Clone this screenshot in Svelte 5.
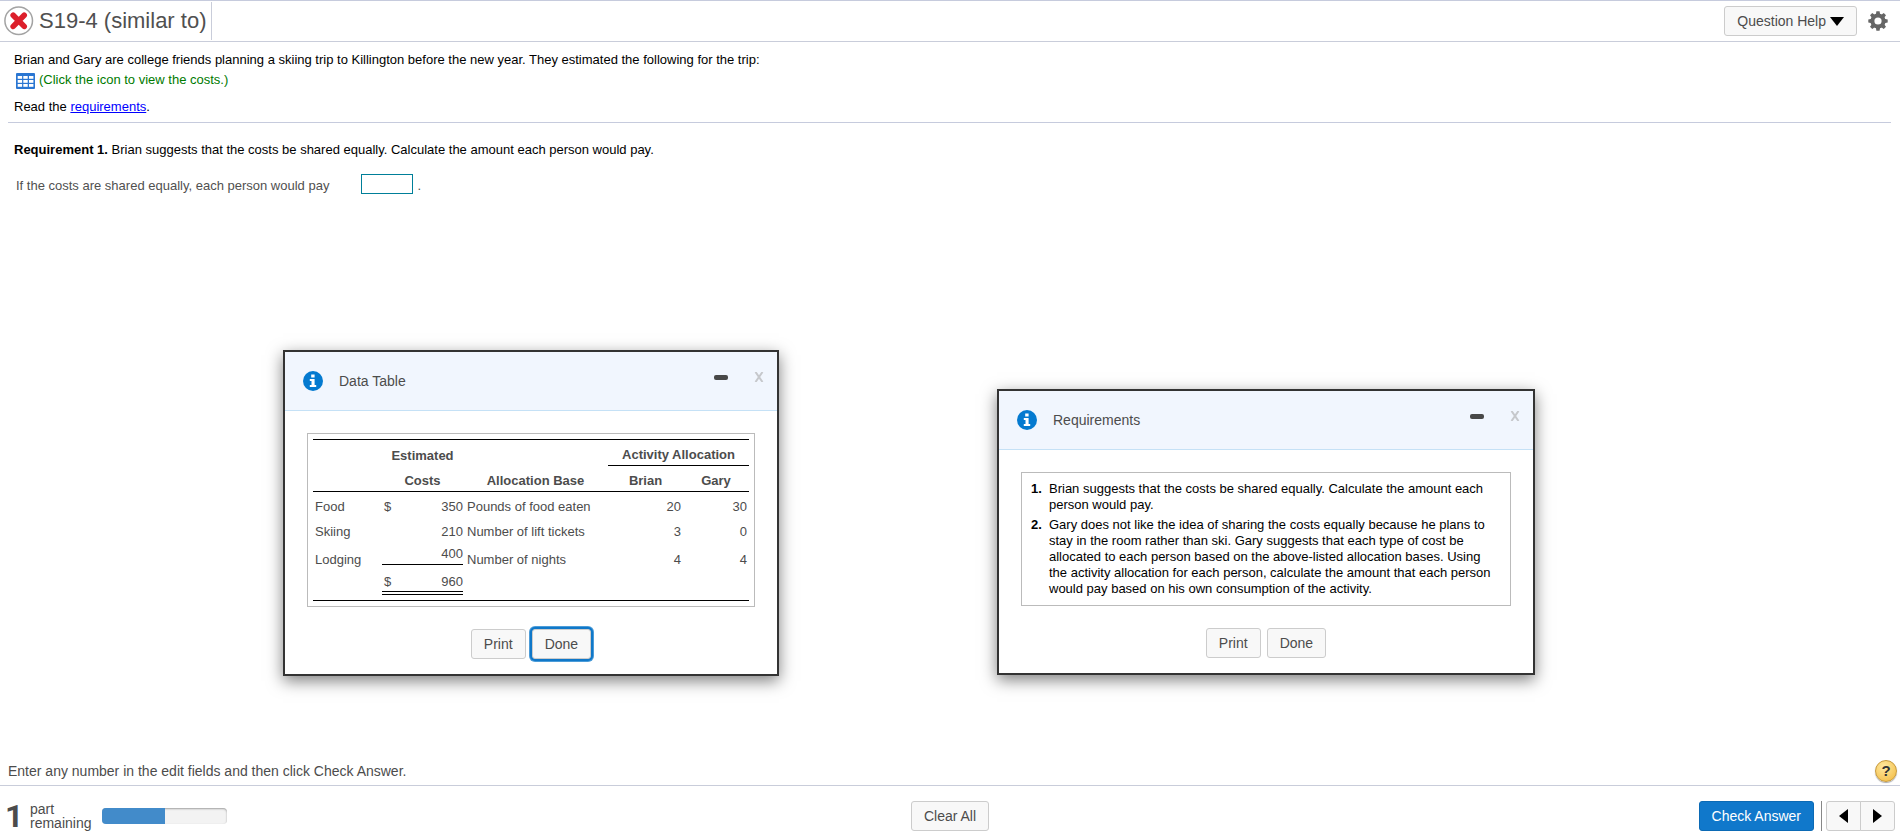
<script>
  const rows = [
    { item: 'Food', sign: '$', cost: '350', base: 'Pounds of food eaten', brian: '20', gary: '30', kind: 'first' },
    { item: 'Skiing', sign: '', cost: '210', base: 'Number of lift tickets', brian: '3', gary: '0', kind: 'plain' },
    { item: 'Lodging', sign: '', cost: '400', base: 'Number of nights', brian: '4', gary: '4', kind: 'last' },
    { item: '', sign: '$', cost: '960', base: '', brian: '', gary: '', kind: 'total' }
  ];
  const requirements = [
    'Brian suggests that the costs be shared equally. Calculate the amount each person would pay.',
    'Gary does not like the idea of sharing the costs equally because he plans to stay in the room rather than ski. Gary suggests that each type of cost be allocated to each person based on the above-listed allocation bases. Using the activity allocation for each person, calculate the amount that each person would pay based on his own consumption of the activity.'
  ];
  const teeth = [0, 45, 90, 135, 180, 225, 270, 315];
  const progress = 50;
  let answer = $state('');
</script>

{#snippet dialogHead(title)}
  <header class="dialog-head">
    <svg class="info" width="20" height="20" viewBox="0 0 20 20" aria-hidden="true">
      <circle cx="10" cy="10" r="10" fill="#047ad0" />
      <path d="M8.2 3.6h3.4v2.8H8.2zM6.8 8h4.8v6h1.6v2H6.8v-2h1.7v-4H6.8z" fill="#fff" />
    </svg>
    <h2>{title}</h2>
    <button class="min" aria-label="Minimize"><span></span></button>
    <button class="close" aria-label="Close">
      <svg width="10" height="10" viewBox="0 0 10 10"><path d="M1.5 0L8.5 10M8.5 0L1.5 10" stroke="#c6c8cc" stroke-width="2" /></svg>
    </button>
  </header>
{/snippet}

<div class="page">
  <header class="top">
    <svg width="30" height="30" viewBox="0 0 30 30" aria-hidden="true">
      <circle cx="14.7" cy="14.7" r="13.8" fill="#fff" stroke="#a3a3a3" stroke-width="1.5" />
      <path d="M9.2 9.2L20.2 20.4M20.2 9.2L9.2 20.4" stroke="#dc1f2b" stroke-width="5.6" stroke-linecap="round" />
    </svg>
    <h1>S19-4 (similar to)</h1>
    <div class="tools">
      <button class="btn help-btn">Question Help
        <svg width="14" height="9" viewBox="0 0 14 9" aria-hidden="true"><path d="M0 0h14L7 9z" fill="#000" /></svg>
      </button>
      <button class="gear" aria-label="Settings">
        <svg width="20" height="20" viewBox="0 0 20 20">
          {#each teeth as angle}
            <path d="M7.8 4L8.4 0.3h3.2L12.2 4z" fill="#666" transform="rotate({angle} 10 10)" />
          {/each}
          <circle cx="10" cy="10" r="5.6" fill="none" stroke="#666" stroke-width="4" />
        </svg>
      </button>
    </div>
  </header>

  <main>
    <section class="intro">
      <p>Brian and Gary are college friends planning a skiing trip to Killington before the new year. They estimated the following for the trip:</p>
      <button class="view">
        <svg width="19" height="16" viewBox="0 0 19 16" aria-hidden="true">
          <rect width="19" height="16" rx="1" fill="#2a76d2" />
          {#each [3, 7, 11] as y}
            {#each [1.7, 7.3, 13] as x}
              <rect {x} {y} width="4.4" height="2.8" fill="#fff" />
            {/each}
          {/each}
        </svg>
        <span>(Click the icon to view the costs.)</span>
      </button>
      <p class="read">Read the <a href="#requirements">requirements</a>.</p>
    </section>
    <section class="question">
      <p><b>Requirement 1.</b> Brian suggests that the costs be shared equally. Calculate the amount each person would pay.</p>
      <div class="answer">
        <label for="share">If the costs are shared equally, each person would pay</label>
        <input id="share" type="text" bind:value={answer} />
        <span>.</span>
      </div>
    </section>
  </main>

  <section class="dialog data" aria-label="Data Table">
    {@render dialogHead('Data Table')}
    <div class="dialog-body">
      <div class="frame table-frame">
        <table>
          <colgroup><col class="c-item" /><col class="c-cost" /><col class="c-base" /><col class="c-brian" /><col /></colgroup>
          <thead>
            <tr><th></th><th>Estimated</th><th></th><th colspan="2" class="group">Activity Allocation</th></tr>
            <tr class="names"><th></th><th>Costs</th><th>Allocation Base</th><th>Brian</th><th>Gary</th></tr>
          </thead>
          <tbody>
            {#each rows as row}
              <tr class={row.kind}>
                <td>{row.item}</td>
                <td class="cost"><div><span>{row.sign}</span><span>{row.cost}</span></div></td>
                <td class="base">{row.base}</td>
                <td class="num">{row.brian}</td>
                <td class="num">{row.gary}</td>
              </tr>
            {/each}
          </tbody>
        </table>
      </div>
      <div class="actions"><button class="btn">Print</button><button class="btn focused">Done</button></div>
    </div>
  </section>

  <section class="dialog reqs" id="requirements" aria-label="Requirements">
    {@render dialogHead('Requirements')}
    <div class="dialog-body">
      <ol class="frame">
        {#each requirements as text, i}
          <li><b>{i + 1}.</b><span>{text}</span></li>
        {/each}
      </ol>
      <div class="actions"><button class="btn">Print</button><button class="btn">Done</button></div>
    </div>
  </section>

  <footer>
    <div class="hint">
      <p>Enter any number in the edit fields and then click Check Answer.</p>
      <button class="tip" aria-label="Help">?</button>
    </div>
    <div class="bar">
      <div class="status">
        <strong>1</strong>
        <span class="parts">part<br />remaining</span>
        <div class="progress" role="progressbar" aria-label="Progress" aria-valuenow={progress} aria-valuemin="0" aria-valuemax="100">
          <div style="width: {progress}%"></div>
        </div>
      </div>
      <button class="btn">Clear All</button>
      <div class="nav">
        <button class="btn primary">Check Answer</button>
        <div class="pager">
          <button aria-label="Previous"><svg width="9" height="14" viewBox="0 0 9 14"><path d="M9 0v14L0 7z" /></svg></button>
          <button aria-label="Next"><svg width="9" height="14" viewBox="0 0 9 14"><path d="M0 0v14l9-7z" /></svg></button>
        </div>
      </div>
    </div>
  </footer>
</div>

<style>
  :global(body) { margin: 0; background: #fff; }
  .page {
    position: relative;
    display: flex;
    flex-direction: column;
    min-height: 100vh;
    box-sizing: border-box;
    font: 13px/16px "Liberation Sans", Arial, sans-serif;
    color: #000;
  }
  .page :global(*) { box-sizing: border-box; }
  svg { display: block; flex: none; }
  p, h1, h2 { margin: 0; }
  button { font: inherit; padding: 0; border: 0; background: none; color: inherit; cursor: pointer; }

  .top {
    display: flex;
    align-items: center;
    height: 42px;
    padding-left: 4px;
    border-top: 1px solid #c6cbdd;
    border-bottom: 1px solid #c9cdda;
  }
  h1 {
    margin-left: 5px;
    padding-right: 5px;
    border-right: 1px solid #c9cdda;
    font-size: 22px;
    font-weight: 400;
    line-height: 38px;
    color: #505050;
  }
  .tools { display: flex; align-items: center; gap: 11px; margin-left: auto; padding-right: 12px; }
  .btn {
    height: 30px;
    padding: 0 12px;
    border: 1px solid #ccc;
    border-radius: 3px;
    background: #f8f8f8;
    font-size: 14px;
    line-height: 20px;
    color: #4c4c4c;
  }
  .help-btn { display: flex; align-items: center; gap: 4px; }

  main { flex: 1; }
  .intro { margin: 0 9px 0 8px; padding: 10px 6px 7px; border-bottom: 1px solid #c6cbdd; }
  .view { display: flex; align-items: flex-end; gap: 4px; margin: 4px 0 0 2px; color: #007a00; height: 17px; }
  .view span { align-self: flex-start; }
  .read { margin-top: 10px; }
  a { color: #00f; }
  .question { padding: 19px 14px; }
  .answer { display: flex; align-items: flex-end; margin: 16px 0 0 2px; color: #505050; }
  input { width: 52px; height: 20px; margin: 0 4px 0 32px; padding: 0 4px; border: 1px solid #007f99; border-radius: 0; font: inherit; outline: 0; }

  .dialog {
    position: absolute;
    border: 2px solid #333;
    background: #fff;
    box-shadow: 0 5px 15px rgba(0, 0, 0, 0.5);
    color: #4c4c4c;
  }
  .data { left: 283px; top: 350px; width: 496px; }
  .reqs { left: 997px; top: 389px; width: 538px; }
  .dialog-head {
    display: flex;
    align-items: center;
    height: 59px;
    padding: 0 13px 0 18px;
    border-bottom: 1px solid #c5e1f6;
    background: #f1f6fe;
  }
  h2 { margin: 0 auto 0 16px; font-size: 14px; font-weight: 400; line-height: 20px; }
  .min { display: grid; place-items: center; width: 14px; height: 20px; margin: 0 26px 8px 0; }
  .min span { width: 14px; height: 5px; border-radius: 2px; background: #484848; }
  .close { display: grid; place-items: center; width: 10px; height: 20px; margin-bottom: 8px; }
  .dialog-body { padding: 22px 22px 15px; }
  .frame { margin: 0; border: 1px solid #bbb; }
  .table-frame { padding: 5px; }
  .actions { display: flex; justify-content: center; gap: 6px; margin-top: 22px; }
  .focused { box-shadow: 0 0 0 2px #1078c9, 0 0 0 3px #4c9cd8; }

  table {
    width: 100%;
    table-layout: fixed;
    border-collapse: separate;
    border-spacing: 0;
    border-top: 1px solid #000;
    border-bottom: 1px solid #000;
  }
  .c-item { width: 69px; }
  .c-cost { width: 81px; }
  .c-base { width: 145px; }
  .c-brian { width: 75px; }
  th { height: 26px; padding: 8px 0 2px; line-height: 16px; vertical-align: top; white-space: nowrap; }
  .group { padding-top: 7px; border-bottom: 1px solid #000; }
  .names th { padding-top: 7px; border-bottom: 1px solid #000; }
  td { height: 25px; padding: 0 2px; line-height: 16px; }
  .first td { height: 28px; padding-top: 1px; }
  .plain td { padding-bottom: 2px; }
  .last td { height: 30px; }
  td.cost { padding-left: 0; padding-right: 0; }
  .last .cost, .total .cost { vertical-align: top; }
  .cost div { display: flex; justify-content: space-between; padding-left: 2px; }
  .last .cost div { padding-bottom: 2px; border-bottom: 1px solid #000; line-height: 17px; }
  .total .cost div { padding-bottom: 3px; border-bottom: 4px double #000; line-height: 13px; }
  td.base { padding-left: 4px; white-space: nowrap; }
  .num { text-align: right; }

  ol { padding: 8px 10px 8px 9px; color: #000; list-style: none; }
  li { display: grid; grid-template-columns: 18px 1fr; }
  li + li { margin-top: 4px; }

  .hint { display: flex; align-items: center; justify-content: space-between; padding: 0 3px 3px 8px; font-size: 14px; color: #4c4c4c; border-bottom: 1px solid #c9cdda; }
  .tip {
    width: 22px;
    height: 22px;
    border: 1px solid #c79a3c;
    border-radius: 50%;
    background: radial-gradient(circle at 40% 30%, #ffe9a0, #f2b83c);
    box-shadow: 0 1px 1px #aaa;
    font-size: 15px;
    font-weight: 700;
    line-height: 20px;
    color: #333;
  }
  .bar { display: grid; grid-template-columns: 1fr auto 1fr; align-items: start; height: 50px; padding: 15px 5px 0; }
  .status { display: flex; align-items: center; height: 30px; color: #4c4c4c; }
  strong { width: 18px; font-family: Roboto, "Liberation Sans", sans-serif; font-size: 32px; line-height: 30px; }
  .parts { margin-left: 7px; font-size: 14px; line-height: 14px; }
  .progress { width: 125px; height: 16px; margin-left: 11px; overflow: hidden; border-radius: 4px; background: #f3f3f3; box-shadow: inset 0 1px 2px rgba(0, 0, 0, 0.35); }
  .progress div { height: 100%; background: #428bca; }
  .nav { display: flex; justify-content: flex-end; }
  .primary { border-color: #0b6ab5; background: #1078cb; color: #fff; }
  .pager { display: flex; margin-left: 7px; padding-left: 4px; border-left: 1px solid #888; }
  .pager button { display: grid; place-items: center; width: 35px; height: 30px; border: 1px solid #ccc; border-radius: 3px 0 0 3px; background: #f8f8f8; }
  .pager button + button { margin-left: -1px; border-radius: 0 3px 3px 0; }
</style>
